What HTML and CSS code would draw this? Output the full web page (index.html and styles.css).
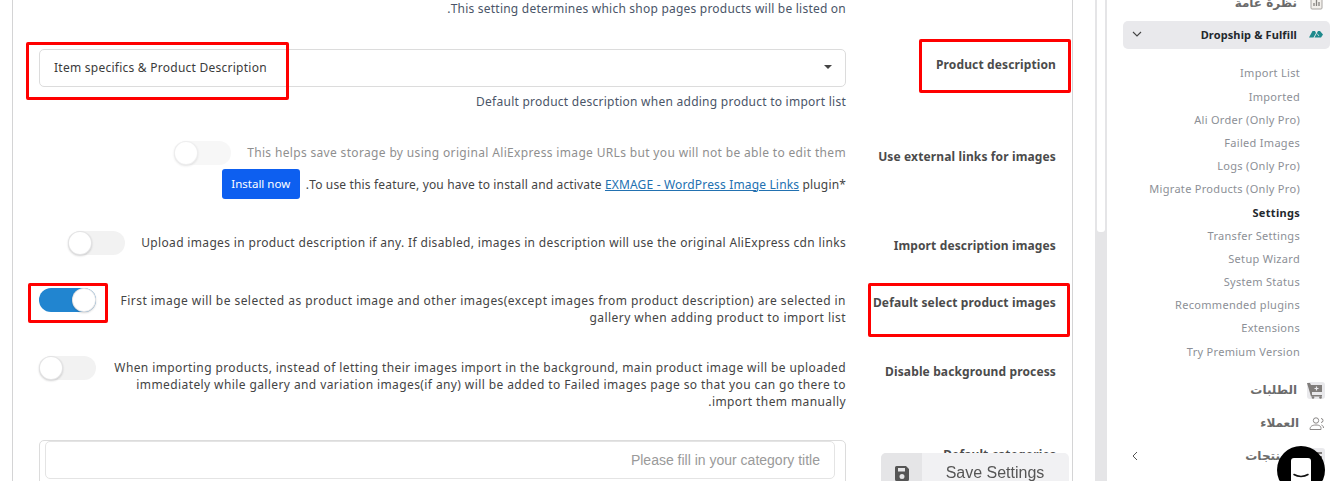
FILE: index.html
```html
<!DOCTYPE html>
<html lang="en" dir="rtl">
<head>
<meta charset="utf-8">
<title>Settings</title>
<link rel="stylesheet" href="styles.css">
</head>
<body>
<div class="app">
  <main class="main">
    <section class="card">
      <div class="row">
        <div class="label-empty"></div>
        <p class="help help-first">This setting determines which shop pages products will be listed on.</p>
      </div>

      <div class="row row-a">
        <div class="label marked"><span class="mark mark-label-a"></span>Product description</div>
        <div class="control marked">
          <span class="mark mark-select"></span>
          <div class="select" dir="ltr"><span>Item specifics &amp; Product Description</span><i class="caret"></i></div>
          <p class="help help-under">Default product description when adding product to import list</p>
        </div>
      </div>

      <div class="row row-b">
        <div class="label">Use external links for images</div>
        <div class="control">
          <div class="with-toggle">
            <span class="text muted">This helps save storage by using original AliExpress image URLs but you will not be able to edit them</span>
            <span class="toggle disabled"><b></b></span>
          </div>
          <div class="install-line">
            <span class="text">*To use this feature, you have to install and activate <a href="#">EXMAGE - WordPress Image Links</a> plugin.</span>
            <a class="install" href="#">Install now</a>
          </div>
        </div>
      </div>

      <div class="row row-c">
        <div class="label">Import description images</div>
        <div class="control with-toggle">
          <span class="text">Upload images in product description if any. If disabled, images in description will use the original AliExpress cdn links</span>
          <span class="toggle"><b></b></span>
        </div>
      </div>

      <div class="row row-d">
        <div class="label marked"><span class="mark mark-label-d"></span>Default select product images</div>
        <div class="control with-toggle wide marked">
          <span class="text">First image will be selected as product image and other images(except images from product description) are selected in gallery when adding product to import list</span>
          <span class="toggle on marked"><span class="mark mark-toggle"></span><b></b></span>
        </div>
      </div>

      <div class="row row-e">
        <div class="label">Disable background process</div>
        <div class="control with-toggle wide">
          <span class="text">When importing products, instead of letting their images import in the background, main product image will be uploaded immediately while gallery and variation images(if any) will be added to Failed images page so that you can go there to import them manually.</span>
          <span class="toggle"><b></b></span>
        </div>
      </div>

      <div class="row row-f">
        <div class="label">Default categories</div>
        <div class="control">
          <div class="multi"><div class="multi-input">Please fill in your category title</div></div>
        </div>
      </div>
    </section>
  </main>

  <div class="scrollbar"><div class="thumb"></div></div>

  <nav class="sidebar">
    <a class="nav nav-top" href="#">
      <svg class="ico" width="14" height="14" viewBox="0 0 14 14"><rect x="2" y="1" width="11" height="12" rx="1" fill="#f3f0ec" stroke="#a9a6a3"/><path d="M5 10V7M7.500 10V4M10 10V6" stroke="#85827f" stroke-width="1.300"/></svg>
      <span lang="ar">نظرة عامة</span>
    </a>

    <a class="nav active" href="#">
      <svg class="ico" width="14" height="8" viewBox="0 0 14 8"><path d="M0 7.500 3.500 1 6 1 7 3 4.500 7.500zM5.500 7.500 9 1h2l3 3.500-2 3z" fill="#1f8a8c"/><path d="M8 3.500 10 6" stroke="#e9e9ec" stroke-width=".8"/></svg>
      <span dir="ltr" class="active-text">Dropship &amp; Fulfill</span>
      <svg class="chev" width="10" height="6" viewBox="0 0 10 6"><path d="M1 1l4 4 4-4" fill="none" stroke="#444" stroke-width="1.100"/></svg>
    </a>

    <ul class="sub">
      <li>Import List</li>
      <li>Imported</li>
      <li>Ali Order (Only Pro)</li>
      <li>Failed Images</li>
      <li>Logs (Only Pro)</li>
      <li>Migrate Products (Only Pro)</li>
      <li class="current">Settings</li>
      <li>Transfer Settings</li>
      <li>Setup Wizard</li>
      <li>System Status</li>
      <li>Recommended plugins</li>
      <li>Extensions</li>
      <li>Try Premium Version</li>
    </ul>

    <a class="nav nav-main" href="#">
      <svg class="ico" width="18" height="17" viewBox="0 0 18 17"><rect width="18" height="17" rx="3" fill="#e9e9ec"/><path d="M0 1h3l1 2h11v7H5v3h10v1.500H4z" fill="#807d7b"/><path d="M9.500 4.500v4M7.500 6.500h4" stroke="#e9e9ec" stroke-width="1.200"/><circle cx="6" cy="15.500" r="1.300" fill="#807d7b"/><circle cx="13.500" cy="15.500" r="1.300" fill="#807d7b"/></svg>
      <span lang="ar">الطلبات</span>
    </a>
    <a class="nav nav-main" href="#">
      <svg class="ico ico-users" width="15" height="13" viewBox="0 0 15 13"><circle cx="7" cy="3.500" r="2.700" fill="none" stroke="#8b8887"/><path d="M1 12.500c0-3 2-4.500 6-4.500s5 1.500 5 3.500v1z" fill="none" stroke="#8b8887"/><path d="M12 5.500a2 2 0 0 0 0-4M14.500 11c0-1.500-.7-2.500-2-3" fill="none" stroke="#8b8887"/></svg>
      <span lang="ar">العملاء</span>
    </a>
    <a class="nav nav-main" href="#">
      <svg class="ico" width="18" height="17" viewBox="0 0 18 17"><rect width="18" height="17" rx="3" fill="#e9e9ec"/><path d="M3 4h12v2H3zM3 8h12v2H3z" fill="#807d7b"/></svg>
      <span lang="ar">المنتجات</span>
      <svg class="chev" width="6" height="10" viewBox="0 0 6 10"><path d="M5 1 1 5l4 4" fill="none" stroke="#555" stroke-width="1"/></svg>
    </a>
  </nav>
</div>

<button class="save" dir="ltr" type="button">
  <span class="save-icon"><svg width="14" height="15" viewBox="0 0 14 15"><path d="M1.500 0H11l3 3v10.500a1.500 1.500 0 0 1-1.500 1.500h-11A1.500 1.500 0 0 1 0 13.500v-12A1.500 1.500 0 0 1 1.500 0zM3 2v3.500h7V2zM7 8a2.500 2.500 0 1 0 0 5 2.500 2.500 0 0 0 0-5z" fill="#555" fill-rule="evenodd"/></svg></span>
  <span class="save-text">Save Settings</span>
</button>

<div class="chat" aria-label="Chat">
  <svg width="20" height="24" viewBox="0 0 20 24"><path d="M3 0h14a3 3 0 0 1 3 3v21H0V3a3 3 0 0 1 3-3z" fill="#fff"/><path d="M3 16.500c4 2.500 10 2.500 14 0" fill="none" stroke="#111" stroke-width="1.500" stroke-linecap="round"/></svg>
</div>
</body>
</html>
```

FILE: styles.css
```css
* { box-sizing: border-box; }
html, body { margin: 0; height: 481px; overflow: hidden; background: #fff; }
body { font-family: "Noto Sans", "DejaVu Sans", sans-serif; font-size: 12px; color: #444; }
p { margin: 0; }
a { text-decoration: none; color: inherit; }

.app { display: flex; flex-direction: row-reverse; height: 481px; }
.main { width: 1095px; flex: none; padding: 0 22px 0 12px; }
.card { height: 481px; overflow: hidden; border: 1px solid #d4d4d5; border-width: 0 1px; padding: 0 16px 0 26px; }

.text, .help { font-size: 12px; line-height: 17px; letter-spacing: .34px; }
.help { color: #4a5568; letter-spacing: .25px; }
.help-first { height: 17px; letter-spacing: .22px; }
.help-under { margin-top: 6px; }

.row { display: grid; grid-template-columns: 210px 1fr; align-items: start; }
.row-a { margin-top: 32px; }
.row-b { margin-top: 31px; }
.row-c { margin-top: 32px; }
.row-d { margin-top: 33px; }
.row-e { margin-top: 30px; }
.row-f { margin-top: 30px; }
.row-d .text { letter-spacing: .45px; }
.row-e .text { letter-spacing: .4px; }

.label { font-weight: 700; font-size: 12px; line-height: 17px; letter-spacing: .13px; color: #4b4b4b; padding-top: 6px; }
.row-a .label { padding-top: 7px; }
.row-b .label { padding-top: 7px; }
.row-e .label { padding-top: 7px; }

.marked { position: relative; }
.mark { position: absolute; border: 3px solid #f00; border-radius: 2px; pointer-events: none; z-index: 2; }
.mark-label-a { top: -10px; right: -15px; width: 152px; height: 54px; }
.mark-label-d { top: -5px; right: -14px; width: 202px; height: 54px; }
.mark-select { top: -7px; left: -13px; width: 263px; height: 58px; }
.mark-toggle { top: -5px; left: -11px; width: 80px; height: 40px; }

.select { height: 38px; display: flex; align-items: center; justify-content: space-between; padding: 0 13px 2px 14px; border: 1px solid #dcdcdc; border-radius: 5px; font-size: 12px; letter-spacing: .25px; color: #3b3b3b; }
.caret { width: 0; height: 0; border: 4px solid transparent; border-top: 4px solid #444; border-bottom: 0; }

.with-toggle { display: flex; align-items: flex-start; justify-content: flex-start; gap: 16px; }
.with-toggle .text { padding-top: 3px; }
.row-d .with-toggle .text { padding-top: 4px; }
.wide .text { flex: 1; }
.muted { color: #8f8f8f; }

.toggle { flex: none; display: block; position: relative; width: 57px; height: 24px; border-radius: 12px; background: #f2f2f2; }
.toggle b { position: absolute; top: 0; left: 0; width: 24px; height: 24px; border-radius: 50%; background: #fff; box-shadow: 0 1px 2px rgba(34,36,38,.2), inset 0 0 0 1px rgba(34,36,38,.12); }
.toggle.on { background: #2185d0; }
.toggle.on b { left: auto; right: 0; }
.toggle.disabled { opacity: .6; }

.install-line { display: flex; align-items: center; gap: 6px; margin-top: 4px; }
.install-line .text { letter-spacing: .16px; }
.install-line a:not(.install) { color: #2271b1; text-decoration: underline; }
.install { display: block; width: 78px; height: 30px; line-height: 29px; text-align: center; background: #0d5ff0; color: #fff; border-radius: 3px; font-size: 11.5px; }

.multi { height: 60px; padding: 0 10px 0 5px; border: 1px solid #dcdcdc; border-radius: 5px; }
.multi-input { height: 38px; padding-right: 14px; line-height: 37px; border: 1px solid #e4e4e4; border-radius: 5px; font-family: "Liberation Sans", Arial, sans-serif; font-size: 14px; color: #9a9a9a; }

.scrollbar { width: 12px; flex: none; background: #e5e5e7; padding: 0 2px; }
.scrollbar .thumb { height: 232px; background: #fff; border-radius: 0 0 3px 3px; }

.sidebar { flex: 1; padding: 0 9px 0 16px; }
.nav { display: flex; align-items: center; gap: 12px; height: 28px; padding-right: 7px; font-family: "DejaVu Sans", sans-serif; font-weight: 700; font-size: 12px; color: #6b6b6b; }
.ico { flex: none; }
.nav-top { margin-top: -11px; margin-bottom: 4px; }
.active { background: #e9e9ec; border-radius: 5px; font-family: "Noto Sans", sans-serif; color: #23282d; padding-bottom: 2px; }
.active-text { font-size: 11px; letter-spacing: .13px; }
.chev { margin-right: auto; margin-left: 9px; }
.sub { list-style: none; margin: 12.4px 0 0; padding: 0 30px 0 0; color: #8c8f96; font-size: 11px; letter-spacing: .3px; }
.sub li { height: 23.2px; line-height: 23px; white-space: nowrap; }
.sub .current { color: #23282d; font-weight: 700; }
.nav-main { height: 33px; padding-right: 5px; gap: 10px; }
.ico-users { margin-right: 1px; }
.sub + .nav-main { margin-top: 11px; }

.save { position: fixed; left: 881px; top: 453px; width: 188px; height: 38px; padding: 0; display: flex; border: 0; border-radius: 5px; background: #f1f1f3; color: #555; font-family: "Liberation Sans", Arial, sans-serif; font-size: 16px; z-index: 3; }
.save-icon { width: 41px; height: 100%; background: #e5e5e7; border-radius: 5px 0 0 5px; display: flex; justify-content: center; padding-top: 13px; }
.save-text { flex: 1; text-align: center; line-height: 40px; padding-right: 1px; }

.chat { position: fixed; left: 1277px; top: 446px; width: 48px; height: 48px; border-radius: 50%; background: #000; display: flex; justify-content: center; padding-top: 12px; z-index: 4; }
```
